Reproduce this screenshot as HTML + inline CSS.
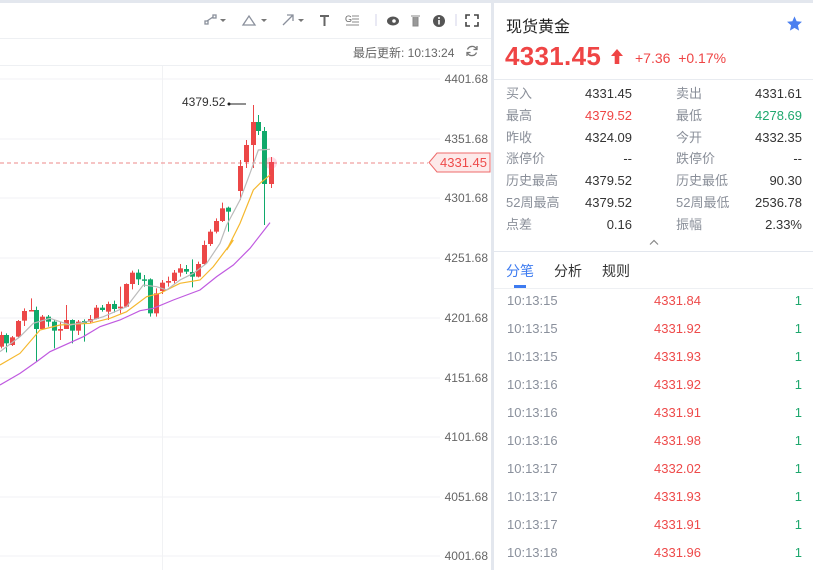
<!DOCTYPE html>
<html><head><meta charset="utf-8"><style>
*{margin:0;padding:0;box-sizing:border-box}
body{width:813px;height:570px;overflow:hidden;background:#fff;font-family:"Liberation Sans","Noto Sans CJK SC",sans-serif;position:relative}
.a{position:absolute;white-space:nowrap}
.lab{color:#8a8f99;font-size:13px;line-height:16px;height:16px}
.val{color:#333;font-size:13px;text-align:right;width:100px;line-height:16px;height:16px}
.t{color:#8a909c;font-size:13px}
.p{color:#ee4a4a;font-size:13px}
.q{color:#1fa86e;font-size:13px;text-align:right;width:20px}
</style></head><body>
<div class="a" style="left:0;top:0;width:813px;height:3px;background:#e3e7ee"></div>
<div class="a" style="left:491px;top:0;width:3px;height:570px;background:#e3e7ee"></div>
<div class="a" style="left:0;top:38px;width:491px;height:1px;background:#eef0f3"></div>
<div class="a" style="left:0;top:65px;width:491px;height:1px;background:#eef0f3"></div>
<!-- toolbar -->
<svg class="a" style="left:195px;top:10px" width="300" height="24" viewBox="195 10 300 24">
<g fill="none" stroke="#8a909c" stroke-width="1.3">
<rect x="205" y="21" width="3" height="3"/><rect x="213" y="15" width="3" height="3"/><line x1="207" y1="21" x2="213" y2="17"/>
<path d="M243 25 L249 16 L255 25 Z"/>
<path d="M283 25 L293 15 M287 15 H293 V21"/>
<line x1="376" y1="14" x2="376" y2="26" stroke="#dde"/><line x1="456" y1="14" x2="456" y2="26" stroke="#dde"/>
<path d="M466 19V15h4 M474 15h4v4 M478 22v4h-4 M470 26h-4v-4" stroke="#444" stroke-width="1.6"/>
</g>
<path d="M220 19l3 3 3-3z M261 19l3 3 3-3z M298 19l3 3 3-3z" fill="#777"/>
<path d="M320 15h9v2h-3.5v9h-2v-9H320z" fill="#666"/>
<text x="345" y="22" font-size="9" fill="#666" font-family="Liberation Sans">G</text>
<path d="M352 16h7M352 19h7M352 22h7M346 25h13" stroke="#888" stroke-width="1"/>
<ellipse cx="393" cy="21" rx="6" ry="4.5" fill="#555"/><circle cx="394" cy="21" r="1.8" fill="#fff"/>
<path d="M411 16h9M413 17v9h5v-9" fill="#999" stroke="#888"/>
<circle cx="439" cy="21" r="6" fill="#555"/><rect x="438.2" y="20" width="1.6" height="4.5" fill="#fff"/><circle cx="439" cy="18" r="1" fill="#fff"/>
</svg>
<div class="a" style="left:353px;top:44px;font-size:12px;color:#666">最后更新: 10:13:24</div>
<svg class="a" style="left:465px;top:44px" width="14" height="14"><path d="M11.5 5A5 5 0 0 0 2.5 5.5M2.5 9A5 5 0 0 0 11.5 8.5" fill="none" stroke="#777" stroke-width="1.3"/><path d="M12 2v3.5H8.5M2 12V8.5h3.5" fill="none" stroke="#777" stroke-width="1.3"/></svg>
<!-- chart -->
<svg id="ch" class="a" style="left:0;top:66px" width="491" height="504" viewBox="0 66 491 504"></svg>
<div class="a" style="left:428px;top:152px;width:63px;height:21px"><svg width="63" height="21"><path d="M1 10.5L9 1H62V20H9Z" fill="#fde9e9" stroke="#ee6b6b"/></svg><span class="a" style="left:12px;top:3px;color:#ee4a4a;font-size:13px">4331.45</span></div>
<div class="a" style="left:182px;top:95px;font-size:12px;color:#333">4379.52</div>
<!-- right panel -->
<div class="a" style="left:506px;top:13px;font-size:16px;color:#222">现货黄金</div>
<svg class="a" style="left:786px;top:15px" width="17" height="17" viewBox="0 0 24 24"><path d="M12 2l3 6.9 7.5.7-5.7 5 1.7 7.4L12 18.1 5.5 22l1.7-7.4-5.7-5 7.5-.7z" fill="#4a7ff0"/></svg>
<div class="a" style="left:505px;top:41px;font-size:26px;font-weight:bold;color:#ef4545;letter-spacing:0.3px">4331.45</div>
<svg class="a" style="left:611px;top:49px" width="12" height="16"><path d="M6 0L12 7H8.3V15H3.7V7H0Z" fill="#ef4545"/></svg>
<div class="a" style="left:635px;top:50px;font-size:14px;color:#ef4545">+7.36&nbsp;&nbsp;+0.17%</div>
<div class="a" style="left:494px;top:79px;width:319px;height:1px;background:#e8ebf0"></div>
<div id="stats"></div>
<svg class="a" style="left:649px;top:239px" width="10" height="7"><path d="M1 5.5L5 1.5 9 5.5" fill="none" stroke="#888" stroke-width="1.2"/></svg>
<div class="a" style="left:494px;top:251px;width:319px;height:1px;background:#e3e7ee"></div>
<div class="a" style="left:506px;top:261px;font-size:14px;color:#3d7bf0">分笔</div>
<div class="a" style="left:554px;top:261px;font-size:14px;color:#333">分析</div>
<div class="a" style="left:602px;top:261px;font-size:14px;color:#333">规则</div>
<div class="a" style="left:514px;top:285px;width:12px;height:3px;background:#3d7bf0"></div>
<div class="a" style="left:494px;top:288px;width:319px;height:1px;background:#eef0f3"></div>
<div id="trades"></div>
<script>
var s='';
var rows=[["买入","4331.45","卖出","4331.61"],["最高","4379.52","最低","4278.69"],["昨收","4324.09","今开","4332.35"],["涨停价","--","跌停价","--"],["历史最高","4379.52","历史最低","90.30"],["52周最高","4379.52","52周最低","2536.78"],["点差","0.16","振幅","2.33%"]];
rows.forEach(function(r,i){var y=86+i*21.8;
var c1=i==1?'#ef4545':'#333',c2=i==1?'#1fa86e':'#333';
s+='<div class="a lab" style="left:506px;top:'+y+'px">'+r[0]+'</div><div class="a val" style="left:532px;top:'+y+'px;color:'+c1+'">'+r[1]+'</div><div class="a lab" style="left:676px;top:'+y+'px">'+r[2]+'</div><div class="a val" style="left:702px;top:'+y+'px;color:'+c2+'">'+r[3]+'</div>';});
document.getElementById('stats').innerHTML=s;
var tr=[["10:13:15","4331.84"],["10:13:15","4331.92"],["10:13:15","4331.93"],["10:13:16","4331.92"],["10:13:16","4331.91"],["10:13:16","4331.98"],["10:13:17","4332.02"],["10:13:17","4331.93"],["10:13:17","4331.91"],["10:13:18","4331.96"]];
s='';tr.forEach(function(r,i){var y=293+i*28;
s+='<div class="a t" style="left:507px;top:'+y+'px">'+r[0]+'</div><div class="a p" style="left:654px;top:'+y+'px">'+r[1]+'</div><div class="a q" style="left:782px;top:'+y+'px">1</div>';});
document.getElementById('trades').innerHTML=s;
var g='';
var gy=[79,139,198,258,318,378,437,497,556],lb=["4401.68","4351.68","4301.68","4251.68","4201.68","4151.68","4101.68","4051.68","4001.68"];
gy.forEach(function(y,i){g+='<line x1="0" x2="440" y1="'+y+'" y2="'+y+'" stroke="#f1f2f4"/><text x="488" y="'+(y+4)+'" text-anchor="end" font-size="12" fill="#666" font-family="Liberation Sans">'+lb[i]+'</text>';});
g+='<line x1="162.5" x2="162.5" y1="66" y2="570" stroke="#f1f2f4"/>';
g+='<line x1="0" x2="428" y1="163" y2="163" stroke="#ee8a8a" stroke-dasharray="4,3"/>';
function Y(z){return 180+z/3}
var c=[[1,465,500,455,505,1],[6,465,490,460,517,0],[12,472,495,468,498,1],[18,423,470,420,475,1],[24,393,422,385,438,1],[31,390,393,355,393,1],[36,390,447,380,545,0],[42,410,447,405,450,1],[48,410,425,405,440,0],[54,425,452,420,505,0],[60,447,452,425,480,1],[66,420,447,375,445,1],[72,420,452,418,490,0],[78,425,452,420,465,1],[84,423,430,418,485,0],[90,417,425,405,430,1],[96,383,417,375,418,1],[102,383,390,375,395,0],[108,372,395,365,420,1],[114,372,387,362,398,0],[120,380,385,320,400,1],[126,312,380,310,382,1],[132,278,312,272,328,1],[138,278,298,268,315,0],[144,298,302,285,320,0],[150,298,400,295,410,0],[156,340,400,325,410,1],[162,308,333,300,342,1],[168,303,308,290,320,1],[174,278,303,270,310,1],[180,265,278,252,290,1],[186,267,275,255,282,0],[192,276,290,238,322,0],[198,252,290,245,292,1],[204,195,252,182,255,1],[210,155,192,148,198,1],[216,123,155,115,160,1],[222,85,123,68,126,1],[228,83,95,80,155,0]];
c.forEach(function(k){var col=k[5]?'#ec4747':'#10a96b';
g+='<line x1="'+(k[0]+0.5)+'" x2="'+(k[0]+0.5)+'" y1="'+Y(k[3])+'" y2="'+Y(k[4])+'" stroke="'+col+'"/><rect x="'+(k[0]-2)+'" y="'+Y(k[1])+'" width="5" height="'+Math.max(1.5,(k[2]-k[1])/3)+'" fill="'+col+'"/>';});
var c2=[[240,166,191,160,200,1],[246,145,162,140,168,1],[253,122,145,105,168,1],[258,122,131,115,135,0],[264,131,184,127,225,0],[271,162,184,157,188,1]];
c2.forEach(function(k){var col=k[5]?'#ec4747':'#10a96b';
g+='<line x1="'+(k[0]+0.5)+'" x2="'+(k[0]+0.5)+'" y1="'+k[3]+'" y2="'+k[4]+'" stroke="'+col+'"/><rect x="'+(k[0]-2)+'" y="'+k[1]+'" width="5" height="'+(k[2]-k[1])+'" fill="'+col+'"/>';});
g+='<line x1="229" x2="246" y1="104" y2="104" stroke="#222"/><circle cx="229" cy="104" r="1.5" fill="#222"/>';
g+='<circle cx="271" cy="163" r="6" fill="#f47" opacity="0.2"/>';
function pl(a,b,col){var p=a.map(function(q){return (q[0]/3)+','+(180+q[1]/3)}).concat(b.map(function(q){return (160+q[0]/3)+','+(90+q[1]/3)}));g+='<polyline points="'+p.join(' ')+'" fill="none" stroke="'+col+'" stroke-width="1.2"/>';}
pl([[0,615],[60,580],[110,545],[150,515],[250,470],[300,440],[360,420],[420,392],[460,385],[520,360],[600,330],[650,290],[700,255],[750,205],[810,128]],[],'#c05ae0');
pl([[0,555],[60,520],[120,450],[180,435],[270,430],[330,415],[380,395],[440,350],[480,340],[540,310],[600,300],[640,260],[700,180]],[[200,480],[240,400],[280,300],[300,280],[330,255]],'#f5b82e');
pl([[0,515],[60,470],[100,430],[150,415],[210,435],[260,425],[310,410],[380,380],[430,315],[470,320],[500,330],[540,300],[580,280],[620,250],[660,190]],[[200,405],[240,330],[270,250],[295,180],[330,178]],'#bbb');
document.getElementById('ch').innerHTML=g;
</script>
</body></html>
